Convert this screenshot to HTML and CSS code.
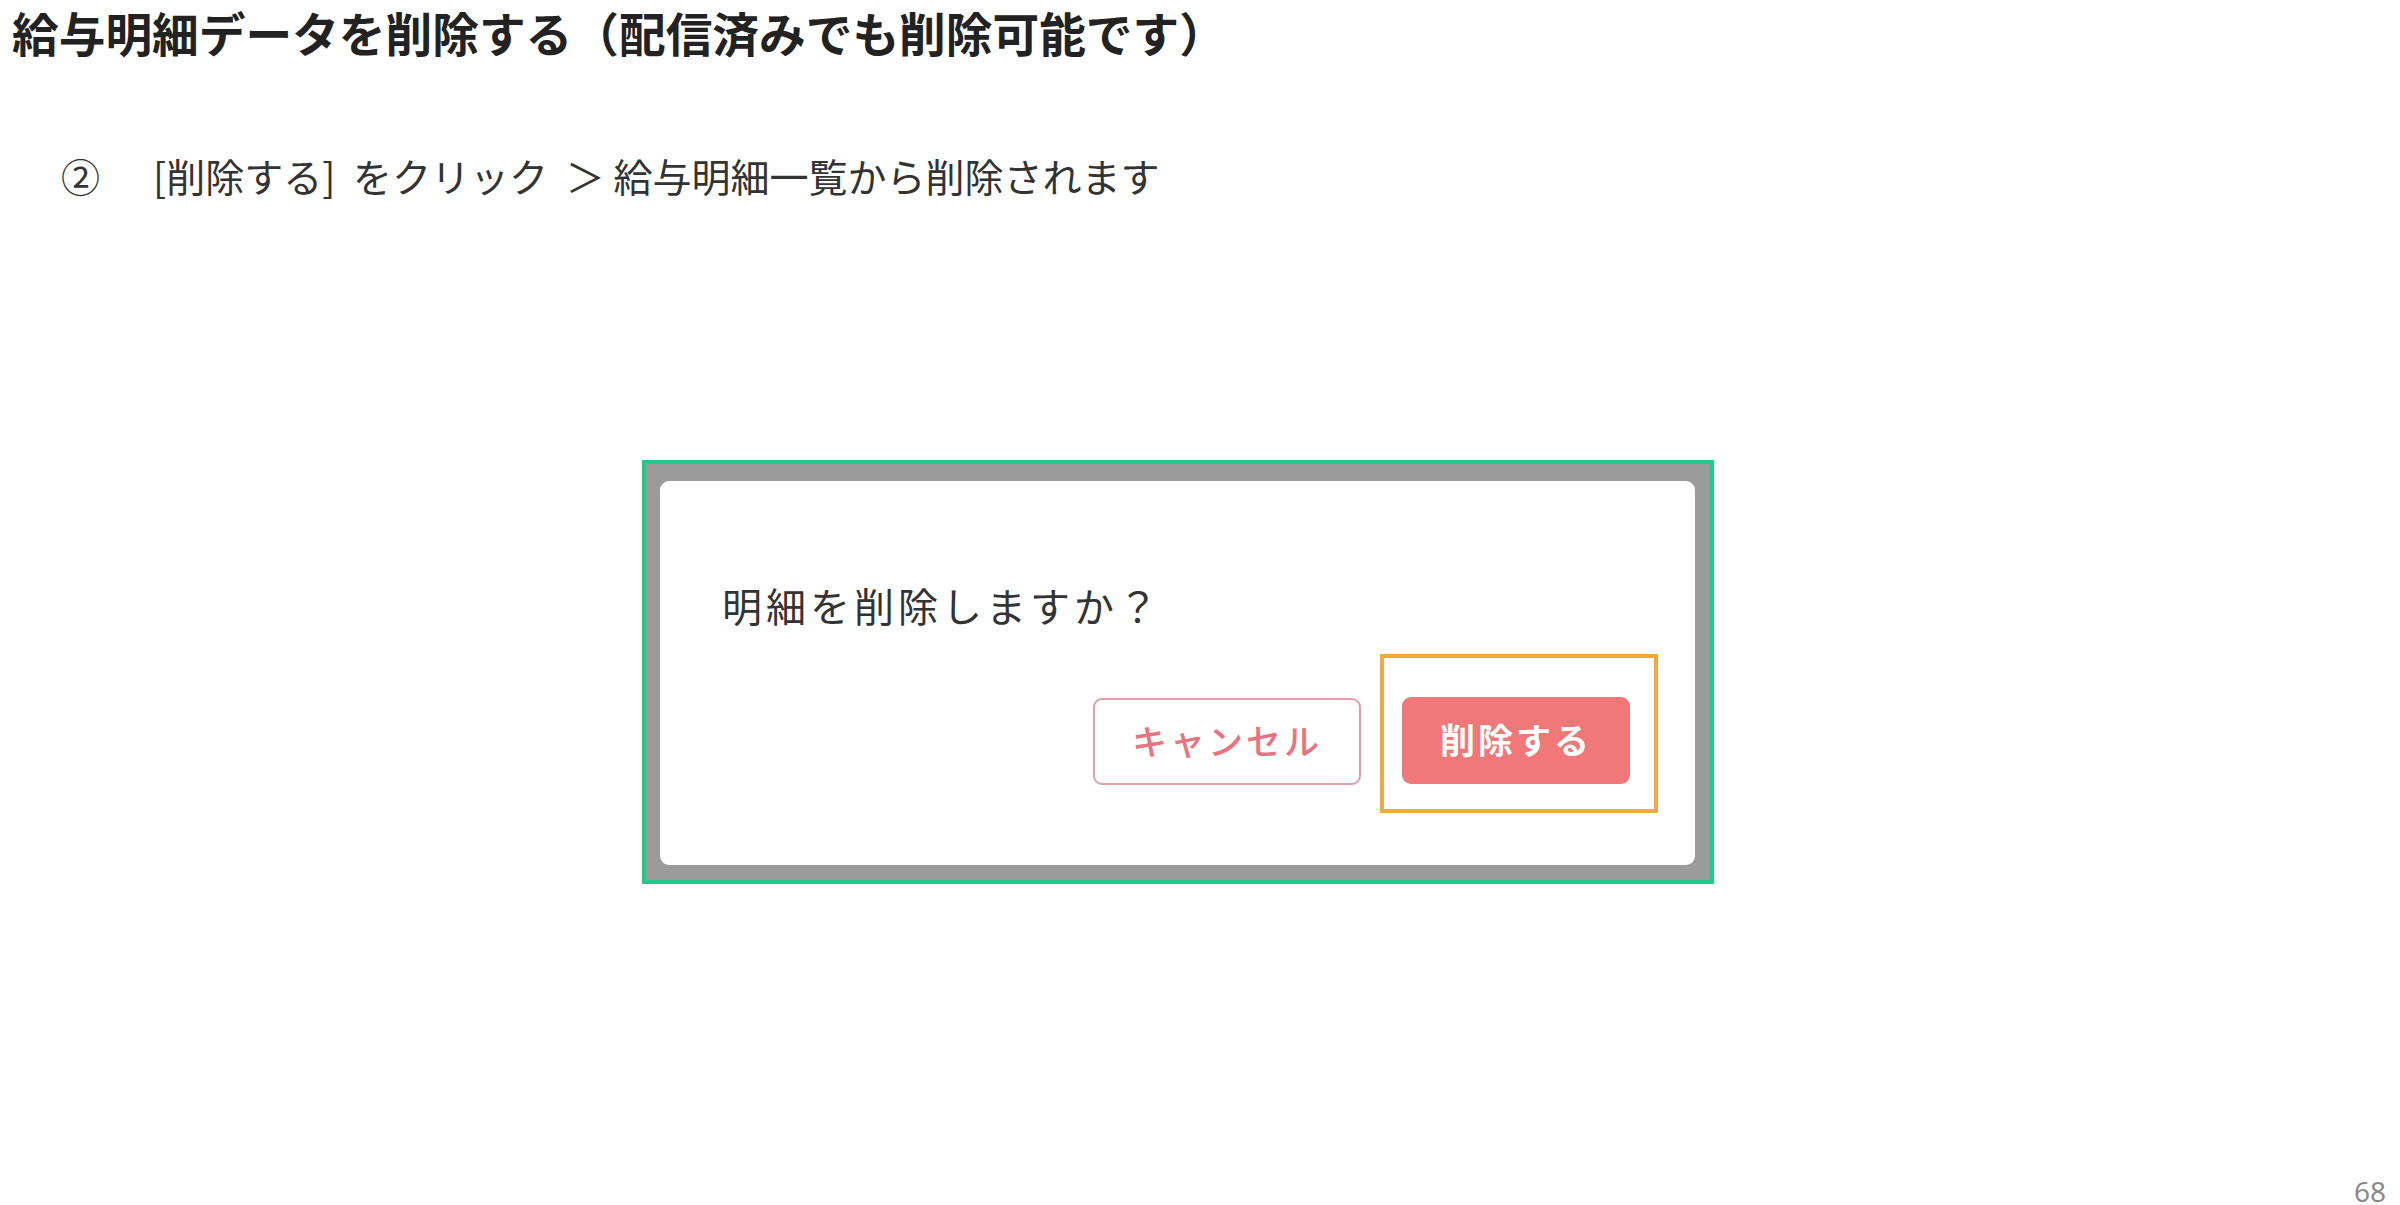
FILE: index.html
```html
<!DOCTYPE html>
<html lang="ja">
<head>
<meta charset="utf-8">
<title>給与明細データを削除する</title>
<link rel="stylesheet" href="styles.css">
</head>
<body>
<div class="page">
  <h1 class="title">給与明細データを削除する（配信済みでも削除可能です）</h1>
  <p class="step"><span class="step-num">②</span><span class="step-action">[削除する] をクリック ＞</span> 給与明細一覧から削除されます</p>
  <div class="stage">
    <div class="dialog">
      <p class="message">明細を削除しますか？</p>
      <div class="actions">
        <button class="btn btn-cancel">キャンセル</button>
        <div class="highlight">
          <button class="btn btn-delete">削除する</button>
        </div>
      </div>
    </div>
  </div>
  <div class="footer">68</div>
</div>
</body>
</html>
```

FILE: styles.css
```css
html, body {
  margin: 0;
  padding: 0;
  background: #ffffff;
}

.page {
  width: 2400px;
  height: 1205px;
  overflow: hidden;
  display: flex;
  flex-direction: column;
  font-family: "Noto Sans CJK JP", "Noto Sans", sans-serif;
  color: #222222;
}

.title {
  margin: 0;
  padding: 2px 0 0 12px;
  font-size: 46.7px;
  line-height: 60px;
  font-weight: 700;
  color: #222222;
  white-space: nowrap;
}

.step {
  margin: 88px 0 0 0;
  padding-left: 61px;
  font-size: 39px;
  line-height: 50px;
  font-weight: 400;
  color: #333333;
  white-space: nowrap;
}

.step-num {
  display: inline-block;
  width: 92px;
}

.step-action {
  word-spacing: 9px;
}

.stage {
  box-sizing: border-box;
  width: 1072px;
  height: 424px;
  margin: 260px 0 0 642px;
  border: 4px solid #22c98a;
  background: #9b9b9b;
  padding: 17px 15px 15px 14px;
}

.dialog {
  box-sizing: border-box;
  height: 100%;
  background: #ffffff;
  border-radius: 9px;
  padding: 0 37px 0 62px;
  display: flex;
  flex-direction: column;
}

.message {
  margin: 98px 0 0 0;
  font-size: 40px;
  line-height: 52px;
  letter-spacing: 4px;
  color: #333333;
}

.actions {
  margin-top: 23px;
  display: flex;
  justify-content: flex-end;
  align-items: flex-start;
  gap: 19px;
}

.btn {
  box-sizing: border-box;
  height: 87px;
  border-radius: 9px;
  font-family: "Noto Sans CJK JP", sans-serif;
  font-size: 35px;
  font-weight: 700;
  letter-spacing: 3px;
  padding: 0 0 4px 0;
  cursor: pointer;
}

.btn-cancel {
  width: 268px;
  margin-top: 44px;
  background: #ffffff;
  border: 2px solid #df9fab;
  color: #e9737f;
  font-weight: 500;
}

.btn-delete {
  display: block;
  width: 228px;
  background: #f07878;
  border: none;
  color: #ffffff;
}

.highlight {
  border: 4px solid #f2aa3c;
  padding: 39px 24px 25px 18px;
}

.footer {
  margin-top: auto;
  margin-bottom: -6px;
  height: 40px;
  line-height: 40px;
  padding-right: 14px;
  text-align: right;
  font-family: "Noto Sans", sans-serif;
  font-size: 28px;
  color: #8a8a8a;
}
```
